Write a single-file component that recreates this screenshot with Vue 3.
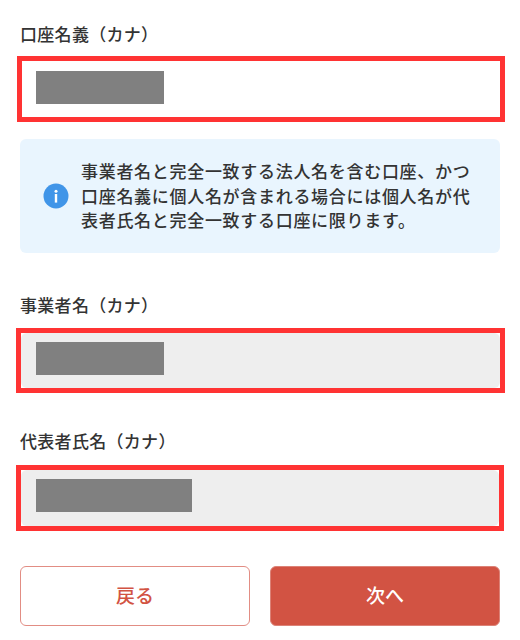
<script setup>
const agree = '事業者名と完全一致する法人名を含む口座、かつ口座名義に個人名が含まれる場合には個人名が代表者氏名と完全一致する口座に限ります。'
</script>

<template>
  <div class="page">
    <label class="label first">口座名義（カナ）</label>
    <div class="mark mark-a">
      <div class="input">
        <span class="hidden-text"></span>
      </div>
    </div>

    <div class="notice">
      <svg class="info" width="26" height="26" viewBox="0 0 26 26">
        <circle cx="13" cy="13" r="12.5" fill="#4095e8" />
        <circle cx="13" cy="8.2" r="1.5" fill="#fff" />
        <rect x="11.8" y="11" width="2.4" height="8.6" fill="#fff" />
      </svg>
      <p>{{ agree }}</p>
    </div>

    <label class="label second">事業者名（カナ）</label>
    <div class="mark mark-b">
      <div class="input readonly">
        <span class="hidden-text"></span>
      </div>
    </div>

    <label class="label third">代表者氏名（カナ）</label>
    <div class="mark mark-c">
      <div class="input readonly">
        <span class="hidden-text wide"></span>
      </div>
    </div>

    <div class="buttons">
      <button class="btn back">戻る</button>
      <button class="btn next">次へ</button>
    </div>
  </div>
</template>

<style scoped>
.page {
  box-sizing: border-box;
  width: 520px;
  height: 640px;
  padding: 24px 20px 0;
  background: #fff;
  color: #333;
  font-family: "Noto Sans CJK JP", sans-serif;
  overflow: hidden;
}

.label {
  display: block;
  height: 20px;
  font-size: 17px;
  line-height: 20px;
  font-weight: 500;
  letter-spacing: 0.3px;
}

.second {
  margin-top: 42px;
}

.third {
  margin-top: 38px;
}

.mark {
  box-sizing: border-box;
  border: 5px solid #ff3333;
}

.mark-a {
  height: 66px;
  margin: 12px -5px 0 -3px;
}

.mark-b {
  height: 65px;
  margin: 13px -5px 0 -4px;
}

.mark-c {
  height: 66px;
  margin: 14px -4px 0 -4px;
}

.input {
  box-sizing: border-box;
  height: 100%;
  padding: 10px 15px;
  background: #fff;
  border-radius: 6px;
}

.mark-a .input {
  padding-left: 14px;
}

.mark-b .input {
  padding-top: 9px;
}

.mark-c .input {
  padding-top: 9px;
}

.readonly {
  background: #eeeeee;
}

.hidden-text {
  display: block;
  width: 128px;
  height: 33px;
  background: #808080;
}

.hidden-text.wide {
  width: 156px;
}

.notice {
  display: flex;
  align-items: center;
  gap: 12px;
  height: 114px;
  margin-top: 17px;
  padding: 0 23px;
  box-sizing: border-box;
  background: #e9f5fe;
  border-radius: 6px;
}

.info {
  flex: none;
}

.notice p {
  margin: 0;
  font-size: 17px;
  line-height: 24.5px;
  letter-spacing: 0.7px;
  font-weight: 500;
}

.buttons {
  display: flex;
  gap: 20px;
  margin-top: 35px;
}

.btn {
  flex: 1;
  height: 60px;
  padding: 0 0 3px;
  border-radius: 6px;
  font-family: inherit;
  font-size: 19px;
  font-weight: 500;
}

.back {
  background: #fff;
  border: 1px solid #e28d84;
  color: #d25343;
}

.next {
  background: #d25343;
  border: 1px solid #dc8277;
  color: #fff;
}
</style>

<style>
html, body {
  margin: 0;
  background: #fff;
}
</style>
